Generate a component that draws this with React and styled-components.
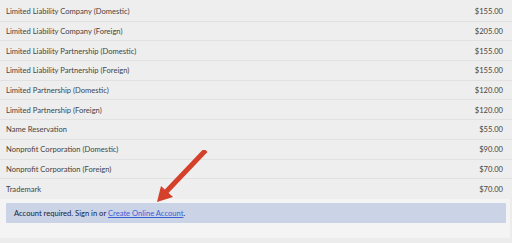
import React from "react";
import styled, { createGlobalStyle } from "styled-components";

const GlobalStyle = createGlobalStyle`
  html, body {
    margin: 0;
    padding: 0;
    background: #ececec;
  }
  body {
    font-family: Lato, "Open Sans", sans-serif;
    width: 512px;
    height: 243px;
    overflow: hidden;
  }
`;

const fees = [
  ["Limited Liability Company (Domestic)", "$155.00"],
  ["Limited Liability Company (Foreign)", "$205.00"],
  ["Limited Liability Partnership (Domestic)", "$155.00"],
  ["Limited Liability Partnership (Foreign)", "$155.00"],
  ["Limited Partnership (Domestic)", "$120.00"],
  ["Limited Partnership (Foreign)", "$120.00"],
  ["Name Reservation", "$55.00"],
  ["Nonprofit Corporation (Domestic)", "$90.00"],
  ["Nonprofit Corporation (Foreign)", "$70.00"],
  ["Trademark", "$70.00"],
];

const App = () => {
  return (
    <>
      <GlobalStyle />
      <Page>
        <FeeTable>
          {fees.map(([name, price]) => (
            <FeeRow key={name}>
              <FeeName>{name}</FeeName>
              <FeePrice>{price}</FeePrice>
            </FeeRow>
          ))}
        </FeeTable>
        <Footer>
          <Notice>
            Account required. Sign in or <NoticeLink href="#">Create Online Account</NoticeLink>.
          </Notice>
        </Footer>
        <Pointer viewBox="0 0 60 60" width="60" height="60">
          <line x1="47" y1="2" x2="9" y2="42" stroke="#d4402a" strokeWidth="5" strokeLinecap="square" />
          <polygon points="0,52 4,36 16,47" fill="#d4402a" />
        </Pointer>
      </Page>
    </>
  );
};

const Page = styled.div`
  position: relative;
  width: 512px;
  height: 243px;
  display: flex;
  flex-direction: column;
`;

const FeeTable = styled.div`
  background: #eeeeee;
  padding-top: 2px;
`;

const FeeRow = styled.div`
  display: flex;
  align-items: center;
  justify-content: space-between;
  height: 19.7px;
  box-sizing: border-box;
  padding: 0 9px 0 6px;
  border-bottom: 1px solid #e1e1e1;
  font-size: 7.6px;
  color: #454545;
  &:last-child {
    border-bottom: none;
  }
`;

const FeeName = styled.span``;

const FeePrice = styled.span``;

const Footer = styled.div`
  background: #f4f4f4;
  padding: 4px 4px 15px 6px;
  margin-right: 2px;
`;

const Notice = styled.div`
  background: #cad4e6;
  border-radius: 1px;
  height: 20px;
  display: flex;
  align-items: center;
  padding-left: 8px;
  font-size: 7.6px;
  color: #18223a;
  white-space: pre;
`;

const NoticeLink = styled.a`
  color: #3b5ed6;
  text-decoration: underline;
`;

const Pointer = styled.svg`
  position: absolute;
  left: 157px;
  top: 150px;
`;

export default App;
